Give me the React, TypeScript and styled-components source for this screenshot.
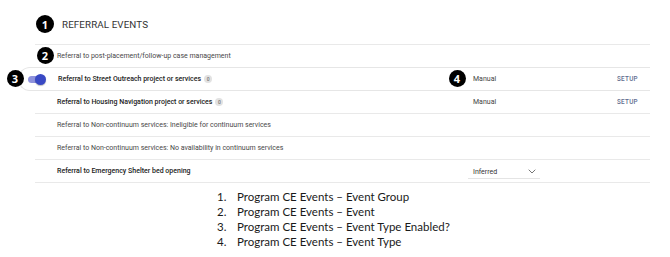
import React from "react";
import styled, { createGlobalStyle } from "styled-components";

const Global = createGlobalStyle`
  html, body { margin: 0; padding: 0; background: #fff; }
  body { font-family: Roboto, "Liberation Sans", sans-serif; color: #333; }
  * { box-sizing: border-box; }
`;

const Frame = styled.div`
  position: relative;
  width: 670px;
  height: 257px;
  background: #fff;
  overflow: hidden;
`;

const Panel = styled.div`
  margin-left: 35px;
  width: 615px;
`;

const Header = styled.div`
  height: 45px;
  display: flex;
  align-items: center;
  padding: 4px 0 0 27px;
  border-bottom: 1px solid #e9e9e9;
  font-size: 9.8px;
  letter-spacing: 0.1px;
  color: #333;
`;

const Row = styled.div<{ $active?: boolean }>`
  height: ${(p) => (p.$active ? "24px" : "23px")};
  display: grid;
  grid-template-columns: ${(p) => (p.$active ? "39px" : "22px")} 1fr 149px 33px;
  align-items: center;
  border-bottom: 1px solid #e9e9e9;
  ${(p) =>
    p.$active &&
    `
    margin-left: -17px;
    margin-top: -1px;
    border: 1px solid #e6e6e6;
    border-right: none;
    border-radius: 12px 0 0 12px;
  `}
`;

const ToggleCell = styled.div`
  display: flex;
  align-items: center;
  padding-left: 9px;
`;

const Track = styled.div`
  position: relative;
  width: 17px;
  height: 7px;
  border-radius: 4px;
  background: #8e92dc;
`;

const Thumb = styled.div`
  position: absolute;
  right: -1px;
  top: -2px;
  width: 11px;
  height: 11px;
  border-radius: 50%;
  background: #3949c4;
  box-shadow: 0 1px 1px rgba(0, 0, 0, 0.25);
`;

const Name = styled.div<{ $bold?: boolean }>`
  display: flex;
  align-items: center;
  gap: 3px;
  font-size: 7px;
  font-weight: ${(p) => (p.$bold ? 500 : 400)};
  color: ${(p) => (p.$bold ? "#222" : "#484848")};
  white-space: nowrap;
`;

const Count = styled.span`
  display: inline-flex;
  align-items: center;
  justify-content: center;
  width: 8px;
  height: 8px;
  border-radius: 50%;
  background: #e2e2e2;
  color: #777;
  font-size: 5px;
  font-weight: 500;
`;

const TypeCell = styled.div`
  padding-left: 5px;
  font-size: 7px;
  color: #444;
`;

const SelectBox = styled.div`
  width: 72px;
  height: 14px;
  margin-top: 2px;
  display: flex;
  align-items: center;
  justify-content: space-between;
  padding: 0 4px 0 5px;
  border-bottom: 1px solid #e4e4e4;
  font-size: 7px;
  color: #333;
`;

const Setup = styled.div`
  font-size: 6.3px;
  font-weight: 500;
  letter-spacing: 0.3px;
  color: #5d6b8d;
`;

const Legend = styled.ol`
  list-style: none;
  margin: 6px 0 0 217px;
  padding: 0;
  font-family: Lato, "Open Sans", sans-serif;
  font-size: 11.5px;
  line-height: 15px;
  color: #1a1a1a;
`;

const LegendItem = styled.li`
  display: flex;
`;

const LegendNum = styled.span`
  width: 20px;
`;

const Callout = styled.div<{ $x: number; $y: number; $size?: number }>`
  position: absolute;
  left: ${(p) => p.$x - (p.$size ?? 17) / 2}px;
  top: ${(p) => p.$y - (p.$size ?? 17) / 2}px;
  width: ${(p) => p.$size ?? 17}px;
  height: ${(p) => p.$size ?? 17}px;
  border-radius: 50%;
  background: #000;
  color: #fff;
  display: flex;
  align-items: center;
  justify-content: center;
  font-family: "Open Sans", "Liberation Sans", sans-serif;
  font-weight: 700;
  font-size: 11px;
  line-height: 1;
`;

const Chevron = () => (
  <svg width="8" height="5" viewBox="0 0 8 5">
    <path d="M0.7 0.7 L4 4 L7.3 0.7" fill="none" stroke="#666" strokeWidth="0.9" />
  </svg>
);

type Ev = {
  name: string;
  bold?: boolean;
  count?: boolean;
  type?: "Manual" | "Inferred";
  setup?: boolean;
  active?: boolean;
};

const events: Ev[] = [
  { name: "Referral to post-placement/follow-up case management" },
  { name: "Referral to Street Outreach project or services", bold: true, count: true, type: "Manual", setup: true, active: true },
  { name: "Referral to Housing Navigation project or services", bold: true, count: true, type: "Manual", setup: true },
  { name: "Referral to Non-continuum services: Ineligible for continuum services" },
  { name: "Referral to Non-continuum services: No availability in continuum services" },
  { name: "Referral to Emergency Shelter bed opening", bold: true, type: "Inferred" },
];

const legend = [
  "Program CE Events – Event Group",
  "Program CE Events – Event",
  "Program CE Events – Event Type Enabled?",
  "Program CE Events – Event Type",
];

export default function App() {
  return (
    <Frame>
      <Global />
      <Panel>
        <Header>REFERRAL EVENTS</Header>
        {events.map((e) => (
          <Row key={e.name} $active={e.active}>
            <ToggleCell>
              {e.active && (
                <Track>
                  <Thumb />
                </Track>
              )}
            </ToggleCell>
            <Name $bold={e.bold}>
              {e.name}
              {e.count && <Count>0</Count>}
            </Name>
            {e.type === "Inferred" ? (
              <SelectBox>
                Inferred
                <Chevron />
              </SelectBox>
            ) : (
              <TypeCell>{e.type ?? ""}</TypeCell>
            )}
            <Setup>{e.setup ? "SETUP" : ""}</Setup>
          </Row>
        ))}
      </Panel>
      <Legend>
        {legend.map((l, i) => (
          <LegendItem key={l}>
            <LegendNum>{i + 1}.</LegendNum>
            {l}
          </LegendItem>
        ))}
      </Legend>
      <Callout $x={45} $y={24} $size={18}>1</Callout>
      <Callout $x={45} $y={55} $size={17}>2</Callout>
      <Callout $x={15} $y={78} $size={17}>3</Callout>
      <Callout $x={457} $y={78} $size={17}>4</Callout>
    </Frame>
  );
}
